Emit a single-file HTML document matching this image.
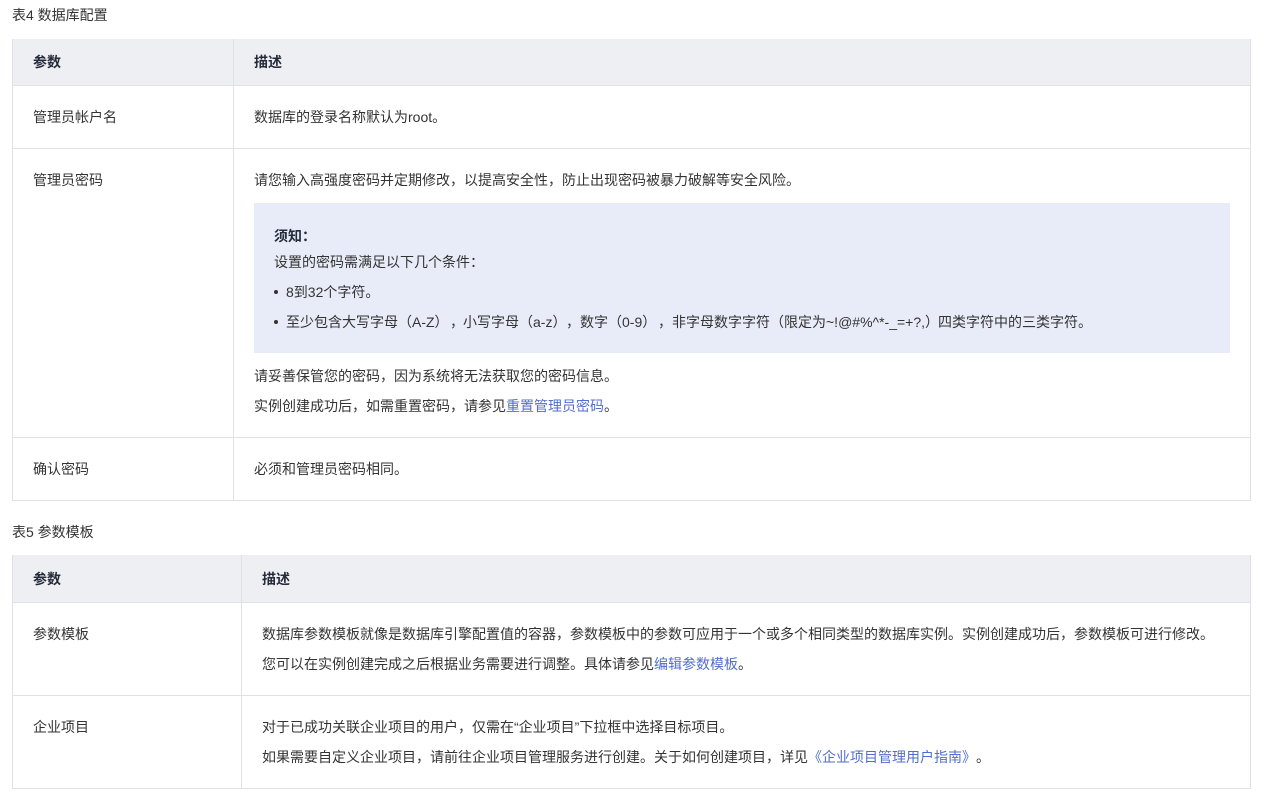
<!DOCTYPE html>
<html lang="zh">
<head>
<meta charset="utf-8">
<style>
html,body{margin:0;padding:0;background:#fff;}
body{width:1281px;height:797px;position:relative;overflow:hidden;font-family:"Liberation Sans","Noto Sans CJK SC",sans-serif;font-size:14px;color:#333;text-spacing-trim:space-all;font-feature-settings:"chws" 0,"halt" 0;}
.r{position:absolute;}
.t{position:absolute;white-space:nowrap;line-height:20px;height:20px;}
.b{font-weight:bold;color:#252b3a;}
a{color:#526ecc;text-decoration:none;}
</style>
</head>
<body>
<div class="t" style="left:12px;top:5px">表4 数据库配置</div>

<div class="r" style="left:13px;top:39px;width:1238px;height:46px;background:#eeeff3"></div>
<div class="r" style="left:12px;top:39px;width:1px;height:462px;background:#dfe1e6"></div>
<div class="r" style="left:1250px;top:39px;width:1px;height:462px;background:#dfe1e6"></div>
<div class="r" style="left:233px;top:39px;width:1px;height:462px;background:#dfe1e6"></div>
<div class="r" style="left:12px;top:85px;width:1239px;height:1px;background:#dfe1e6"></div>
<div class="r" style="left:12px;top:148px;width:1239px;height:1px;background:#dfe1e6"></div>
<div class="r" style="left:12px;top:437px;width:1239px;height:1px;background:#dfe1e6"></div>
<div class="r" style="left:12px;top:500px;width:1239px;height:1px;background:#dfe1e6"></div>

<div class="t b" style="left:33px;top:52px">参数</div>
<div class="t b" style="left:254px;top:52px">描述</div>
<div class="t" style="left:33px;top:107px">管理员帐户名</div>
<div class="t" style="left:254px;top:107px">数据库的登录名称默认为root。</div>
<div class="t" style="left:33px;top:170px">管理员密码</div>
<div class="t" style="left:254px;top:170px">请您输入高强度密码并定期修改，以提高安全性，防止出现密码被暴力破解等安全风险。</div>

<div class="r" style="left:254px;top:203px;width:976px;height:150px;background:#e8ecf8"></div>
<div class="t b" style="left:274px;top:226px">须知：</div>
<div class="t" style="left:274px;top:252px">设置的密码需满足以下几个条件：</div>
<div class="r" style="left:274px;top:290px;width:4px;height:4px;border-radius:50%;background:#333"></div>
<div class="t" style="left:286px;top:282px">8到32个字符。</div>
<div class="r" style="left:274px;top:320px;width:4px;height:4px;border-radius:50%;background:#333"></div>
<div class="t" style="left:286px;top:312px">至少包含大写字母（A-Z）</div>
<div class="t" style="left:450px;top:312px">，</div>
<div class="t" style="left:463px;top:312px">小写字母（a-z）</div>
<div class="t" style="left:566px;top:312px">，</div>
<div class="t" style="left:580px;top:312px">数字（0-9）</div>
<div class="t" style="left:658px;top:312px">，</div>
<div class="t" style="left:672px;top:312px">非字母数字字符（限定为~!@#%^*-_=+?,）</div>
<div class="t" style="left:938px;top:312px">四类字符中的三类字符。</div>

<div class="t" style="left:254px;top:366px">请妥善保管您的密码，因为系统将无法获取您的密码信息。</div>
<div class="t" style="left:254px;top:396px">实例创建成功后，如需重置密码，请参见<a>重置管理员密码</a>。</div>
<div class="t" style="left:33px;top:459px">确认密码</div>
<div class="t" style="left:254px;top:459px">必须和管理员密码相同。</div>

<div class="t" style="left:12px;top:522px">表5 参数模板</div>

<div class="r" style="left:13px;top:555px;width:1238px;height:47px;background:#eeeff3"></div>
<div class="r" style="left:12px;top:555px;width:1px;height:234px;background:#dfe1e6"></div>
<div class="r" style="left:1250px;top:555px;width:1px;height:234px;background:#dfe1e6"></div>
<div class="r" style="left:241px;top:555px;width:1px;height:234px;background:#dfe1e6"></div>
<div class="r" style="left:12px;top:602px;width:1239px;height:1px;background:#dfe1e6"></div>
<div class="r" style="left:12px;top:695px;width:1239px;height:1px;background:#dfe1e6"></div>
<div class="r" style="left:12px;top:788px;width:1239px;height:1px;background:#dfe1e6"></div>

<div class="t b" style="left:33px;top:569px">参数</div>
<div class="t b" style="left:262px;top:569px">描述</div>
<div class="t" style="left:33px;top:624px">参数模板</div>
<div class="t" style="left:262px;top:624px">数据库参数模板就像是数据库引擎配置值的容器，参数模板中的参数可应用于一个或多个相同类型的数据库实例。实例创建成功后，参数模板可进行修改。</div>
<div class="t" style="left:262px;top:654px">您可以在实例创建完成之后根据业务需要进行调整。具体请参见<a>编辑参数模板</a>。</div>
<div class="t" style="left:33px;top:717px">企业项目</div>
<div class="t" style="left:262px;top:717px">对于已成功关联企业项目的用户，仅需在“企业项目”下拉框中选择目标项目。</div>
<div class="t" style="left:262px;top:747px">如果需要自定义企业项目，请前往企业项目管理服务进行创建。关于如何创建项目，详见<a>《企业项目管理用户指南》</a>。</div>
</body>
</html>
